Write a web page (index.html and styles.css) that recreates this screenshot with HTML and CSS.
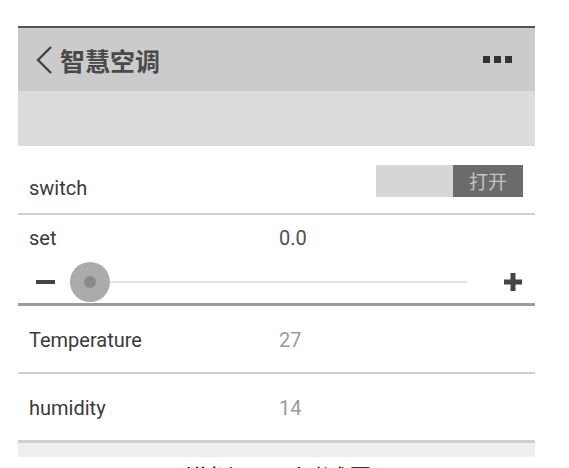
FILE: index.html
```html
<!DOCTYPE html>
<html lang="zh">
  <head>
    <meta charset="UTF-8" />
    <meta name="viewport" content="width=device-width,initial-scale=1.0" />
    <title>智慧空调</title>
    <link rel="stylesheet" href="styles.css">
  </head>
  <body>
    <div class="page">
      <div class="app">
        <header class="topbar">
          <div class="back">
            <svg class="chevron" width="18" height="28" viewBox="0 0 18 28">
              <polyline points="16,1 3,14 16,27" fill="none" stroke="#444" stroke-width="2.4" />
            </svg>
            <span class="title">智慧空调</span>
          </div>
          <div class="more">
            <span></span><span></span><span></span>
          </div>
        </header>
        <div class="band"></div>

        <div class="row switch-row">
          <div class="label">switch</div>
          <div class="toggle">
            <div class="toggle-off"></div>
            <div class="toggle-on">打开</div>
          </div>
        </div>

        <div class="row set-row">
          <div class="line">
            <div class="label">set</div>
            <div class="value dark">0.0</div>
          </div>
          <div class="slider">
            <div class="minus"></div>
            <div class="knob"><div class="knob-dot"></div></div>
            <div class="track"></div>
            <svg class="plus" width="18" height="18" viewBox="0 0 18 18">
              <rect x="6.5" y="0" width="5" height="18" fill="#444" />
              <rect x="0" y="6.5" width="18" height="5" fill="#444" />
            </svg>
          </div>
        </div>

        <div class="row data-row">
          <div class="label">Temperature</div>
          <div class="value">27</div>
        </div>

        <div class="row data-row last">
          <div class="label">humidity</div>
          <div class="value">14</div>
        </div>
        <div class="foot"></div>
      </div>
      <div class="caption">图 5&nbsp;&nbsp;模拟 APP 测试界面</div>
    </div>
  </body>
</html>
```

FILE: styles.css
```css
* {
  padding: 0;
  margin: 0;
  box-sizing: border-box;
}
body {
  background: #fff;
  font-family: Roboto, 'Noto Sans CJK SC', sans-serif;
  overflow: hidden;
}
.page {
  padding: 26px 34px 0 18px;
}
.app {
  width: 517px;
}
.topbar {
  height: 65px;
  border-top: 2px solid #555;
  background: #cbcbcb;
  display: flex;
  align-items: center;
  justify-content: space-between;
  padding: 0 23px 0 17px;
}
.back {
  display: flex;
  align-items: center;
  gap: 7px;
}
.chevron {
  display: block;
}
.title {
  font-family: 'Noto Sans CJK SC', sans-serif;
  font-size: 25px;
  line-height: 28px;
  font-weight: 700;
  color: #4a4a4a;
}
.more {
  display: flex;
  gap: 4px;
}
.more span {
  width: 7px;
  height: 7px;
  background: #333;
}
.band {
  height: 55px;
  background: #dcdcdc;
}
.row {
  border-bottom: 2px solid #d0d0d0;
  padding: 0 12px 0 11px;
}
.label {
  font-size: 20px;
  line-height: 24px;
  color: #3a3a3a;
}
.value {
  font-size: 20px;
  line-height: 24px;
  color: #9a9a9a;
}
.value.dark {
  color: #505050;
}
.switch-row {
  height: 69px;
  display: flex;
  align-items: flex-start;
  justify-content: space-between;
  padding-top: 19px;
}
.switch-row .label {
  margin-top: 11px;
}
.toggle {
  width: 147px;
  height: 32px;
  display: flex;
}
.toggle-off {
  flex: 1;
  background: #d6d6d6;
}
.toggle-on {
  width: 70px;
  background: #6b6b6b;
  color: #c4c4c4;
  font-family: 'Noto Sans CJK SC', sans-serif;
  font-size: 19px;
  line-height: 32px;
  text-align: center;
}
.set-row {
  padding-top: 11px;
  padding-bottom: 1px;
  border-bottom: 3px solid #9b9b9b;
}
.line {
  display: flex;
}
.line .label {
  width: 250px;
}
.slider {
  margin-top: 12px;
  height: 40px;
  display: flex;
  align-items: center;
}
.minus {
  width: 19px;
  height: 4px;
  background: #444;
  margin-left: 7px;
  margin-right: 15px;
}
.knob {
  width: 40px;
  height: 40px;
  border-radius: 50%;
  background: #ababab;
  display: flex;
  align-items: center;
  justify-content: center;
}
.knob-dot {
  width: 12px;
  height: 12px;
  border-radius: 50%;
  background: #8a8a8a;
}
.track {
  flex: 1;
  height: 2px;
  background: #e4e4e4;
  margin-right: 37px;
}
.plus {
  display: block;
  margin-right: 1px;
}
.data-row {
  height: 68px;
  display: flex;
  padding-top: 22px;
}
.data-row .label {
  width: 250px;
}
.data-row.last {
  height: 69px;
  border-bottom: 3px solid #d0d0d0;
}
.foot {
  height: 14px;
  background: #eeeeee;
}
.caption {
  margin-top: 8px;
  padding-left: 107px;
  font-family: 'Noto Sans CJK SC', sans-serif;
  font-size: 26px;
  line-height: 26px;
  color: #000;
  white-space: nowrap;
}
```
